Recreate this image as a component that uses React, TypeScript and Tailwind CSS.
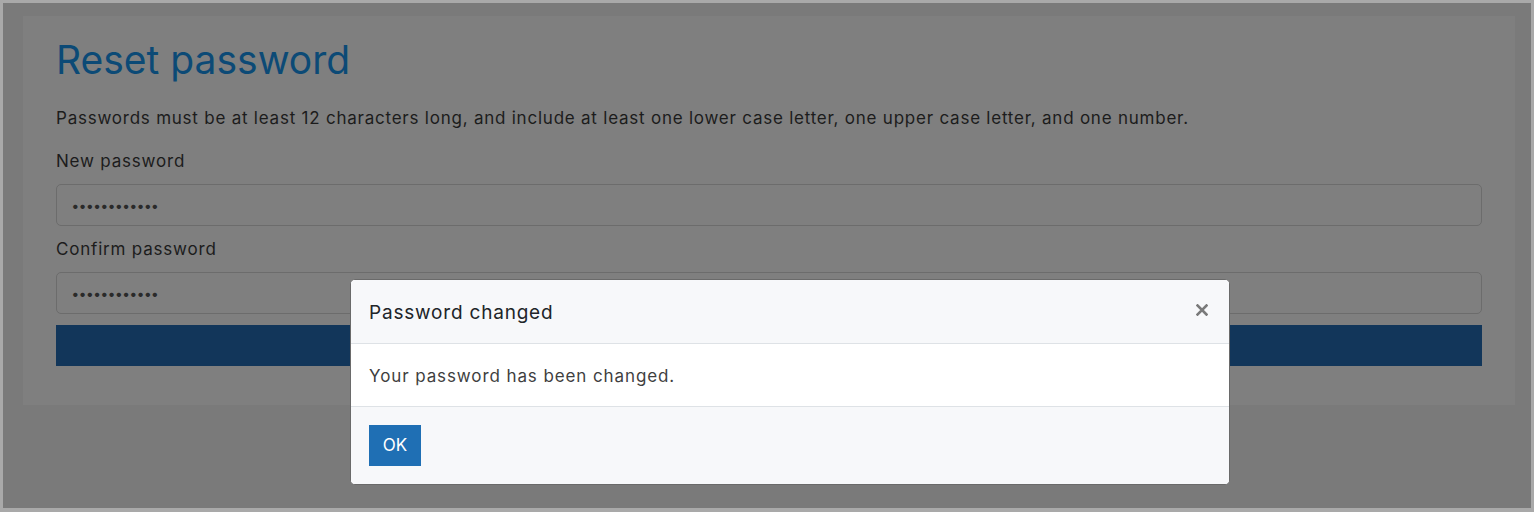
import React from "react";

const font = { fontFamily: '"Inter", "Noto Sans", sans-serif' };

function Field({ label }: { label: string }) {
  return (
    <div className="flex flex-col">
      <label className="text-[17px] leading-[24px] text-[#1c1c1c] tracking-[0.8px] mb-[11px]">{label}</label>
      <div className="h-[42px] rounded-[5px] border border-[#6c6c6c] bg-[#7f7f7f] flex items-center pl-[15px]">
        <span className="text-[#2a2a2a] text-[14px] tracking-[0.6px] font-bold">••••••••••••</span>
      </div>
    </div>
  );
}

function App() {
  return (
    <div style={font} className="relative w-[1534px] h-[512px] border-[#a9a9a9] border-t-[3px] border-l-[3px] border-r-[3px] border-b-[4px] bg-[#7a7a7a] pl-[20px] pr-[16px] pt-[13px] overflow-hidden">
      <div className="h-[389px] bg-[#7f7f7f] px-[33px] pt-[20px]">
        <h1 className="text-[39px] leading-[48px] text-[#0c4a76]">Reset password</h1>
        <p className="mt-[22px] text-[17px] leading-[24px] text-[#1c1c1c] tracking-[0.77px]">
          Passwords must be at least 12 characters long, and include at least one lower case letter, one upper case letter, and one number.
        </p>
        <div className="mt-[19px] flex flex-col gap-[11px]">
          <Field label="New password" />
          <Field label="Confirm password" />
        </div>
        <div className="mt-[11px] h-[41px] bg-[#12365a]" />
      </div>

      <div className="absolute left-[347px] top-[276px] w-[880px] h-[206px] rounded-[5px] bg-white overflow-hidden flex flex-col border border-[#6a6a6a]">
        <div className="h-[64px] bg-[#f7f8fa] border-b border-[#dee2e6] flex items-center justify-between pt-[4px] pl-[18px] pr-[21px]">
          <span className="text-[19px] text-[#212529] tracking-[0.8px]">Password changed</span>
          <svg width="12" height="12" viewBox="0 0 12 12" className="mt-[-8px]">
            <path d="M1.5 1.5 L10.5 10.5 M10.5 1.5 L1.5 10.5" stroke="#7a7a7a" strokeWidth="2.6" strokeLinecap="square" />
          </svg>
        </div>
        <div className="h-[63px] border-b border-[#dee2e6] flex items-center pt-[4px] pl-[18px]">
          <span className="text-[17px] text-[#3f3f3f] tracking-[0.9px]">Your password has been changed.</span>
        </div>
        <div className="flex-1 bg-[#f7f8fa] flex items-center pl-[18px]">
          <button className="w-[52px] h-[41px] bg-[#1f6fb4] text-white text-[17px] flex items-center justify-center">OK</button>
        </div>
      </div>
    </div>
  );
}

export default App;
